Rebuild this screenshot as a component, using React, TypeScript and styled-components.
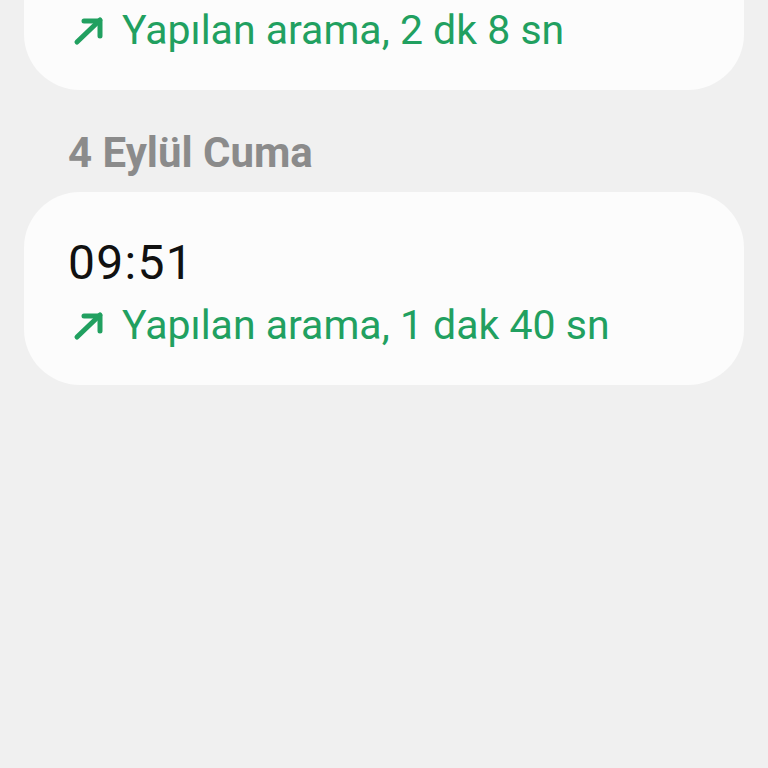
import React from 'react'
import styled, { createGlobalStyle } from 'styled-components'

const GlobalStyle = createGlobalStyle`
  html, body {
    margin: 0;
    padding: 0;
    background: #f0f0f0;
    font-family: Roboto, 'Noto Sans', 'Liberation Sans', sans-serif;
  }
  #root {
    min-height: 768px;
  }
`

const Page = styled.div`
  display: flex;
  flex-direction: column;
  padding: 0 24px;
  overflow: hidden;
  height: 768px;
`

const Card = styled.div<{ $cut?: boolean }>`
  background: #fcfcfc;
  border-radius: 56px;
  padding: ${({ $cut }) => ($cut ? '80px 44px 36px 44px' : '43px 44px 36px 44px')};
  margin-top: ${({ $cut }) => ($cut ? '-74px' : '0')};
  display: flex;
  flex-direction: column;
`

const DayTitle = styled.div`
  font-size: 42px;
  line-height: 48px;
  font-weight: 700;
  color: #8b8b8b;
  padding: 0 44px;
  margin: 39px 0 15px 0;
`

const Time = styled.div`
  font-size: 48px;
  line-height: 56px;
  letter-spacing: 1.3px;
  color: #111111;
  margin-bottom: 10px;
`

const CallRow = styled.div`
  display: flex;
  align-items: center;
  gap: 18px;
  font-size: 41px;
  line-height: 48px;
  color: #21a060;

  svg {
    flex: none;
    width: 32px;
    height: 32px;
    margin-left: 4px;
    margin-top: 2px;
  }
`

const OutgoingIcon = () => (
  <svg viewBox="0 0 32 32" fill="none" stroke="#21a060" strokeWidth="5" strokeLinecap="round" strokeLinejoin="round">
    <path d="M5 27 L28 5" />
    <path d="M12 6 H28 V21" />
  </svg>
)

interface Call {
  time?: string
  label: string
}

const CallCard: React.FC<Call & { cut?: boolean }> = ({ time, label, cut }) => (
  <Card $cut={cut}>
    {time && <Time>{time}</Time>}
    <CallRow>
      <OutgoingIcon />
      <span>{label}</span>
    </CallRow>
  </Card>
)

export default function App() {
  return (
    <>
      <GlobalStyle />
      <Page>
        <CallCard cut label="Yapılan arama, 2 dk 8 sn" />
        <DayTitle>4 Eylül Cuma</DayTitle>
        <CallCard time="09:51" label="Yapılan arama, 1 dak 40 sn" />
      </Page>
    </>
  )
}
